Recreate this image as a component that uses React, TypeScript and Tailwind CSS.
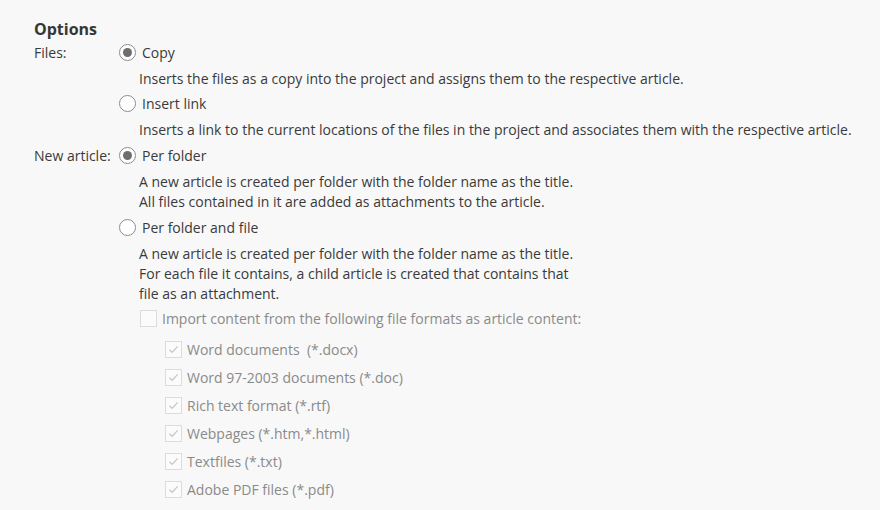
import React from "react";

const font = { fontFamily: '"Open Sans", "Noto Sans", sans-serif' };

function Radio({ checked }: { checked?: boolean }) {
  return (
    <span className="flex h-[17px] w-[17px] shrink-0 items-center justify-center rounded-full border border-[#8c8c8c] bg-white">
      {checked && <span className="h-[9px] w-[9px] rounded-full bg-[#6e6e6e]" />}
    </span>
  );
}

function Check({ checked }: { checked?: boolean }) {
  return (
    <span className="flex h-[17px] w-[17px] shrink-0 items-center justify-center border border-[#dcdcdc] bg-[#fbfbfb]">
      {checked && (
        <svg width="11" height="11" viewBox="0 0 11 11" fill="none">
          <path d="M1.5 5.8 L4.2 8.4 L9.6 2.4" stroke="#c4c4c4" strokeWidth="1.2" />
        </svg>
      )}
    </span>
  );
}

function RadioRow({ checked, label, className = "" }: { checked?: boolean; label: string; className?: string }) {
  return (
    <div className={"flex h-[22px] items-center gap-[6px] " + className}>
      <Radio checked={checked} />
      <span>{label}</span>
    </div>
  );
}

function Desc({ children, className = "" }: { children: React.ReactNode; className?: string }) {
  return <div className={"whitespace-nowrap pl-[20px] leading-[20px] " + className}>{children}</div>;
}

const formats = [
  "Word documents  (*.docx)",
  "Word 97-2003 documents (*.doc)",
  "Rich text format (*.rtf)",
  "Webpages (*.htm,*.html)",
  "Textfiles (*.txt)",
  "Adobe PDF files (*.pdf)",
];

export default function App() {
  return (
    <div
      className="h-[510px] w-[880px] overflow-hidden bg-[#f8f8f8] pl-[34px] pt-[17px] text-[14px] text-[#3a3a3a]"
      style={font}
    >
      <div className="flex h-[24px] items-center text-[16px] font-bold text-[#363636]">Options</div>

      <div className="flex">
        <div className="flex h-[22px] w-[85px] shrink-0 items-center">Files:</div>
        <div className="flex flex-col">
          <RadioRow checked label="Copy" />
          <Desc className="mt-[6px]">
            Inserts the files as a copy into the project and assigns them to the respective article.
          </Desc>
          <RadioRow label="Insert link" className="mt-[3px]" />
          <Desc className="mt-[6px]">
            Inserts a link to the current locations of the files in the project and associates them with the respective article.
          </Desc>
        </div>
      </div>

      <div className="mt-[4px] flex">
        <div className="flex h-[22px] w-[85px] shrink-0 items-center">New article:</div>
        <div className="flex flex-col">
          <RadioRow checked label="Per folder" />
          <Desc className="mt-[6px]">
            A new article is created per folder with the folder name as the title.
            <br />
            All files contained in it are added as attachments to the article.
          </Desc>
          <RadioRow label="Per folder and file" className="mt-[4px]" />
          <Desc className="mt-[6px]">
            A new article is created per folder with the folder name as the title.
            <br />
            For each file it contains, a child article is created that contains that
            <br />
            file as an attachment.
          </Desc>
          <div className="mt-[3px] flex h-[22px] items-center gap-[5px] pl-[21px] text-[#8a8a8a]">
            <Check />
            <span>Import content from the following file formats as article content:</span>
          </div>
          <div className="mt-[9px] flex flex-col gap-[6px] pl-[46px] text-[#8a8a8a]">
            {formats.map((f) => (
              <div key={f} className="flex h-[22px] items-center gap-[5px]">
                <Check checked />
                <span className="whitespace-pre">{f}</span>
              </div>
            ))}
          </div>
        </div>
      </div>
    </div>
  );
}
